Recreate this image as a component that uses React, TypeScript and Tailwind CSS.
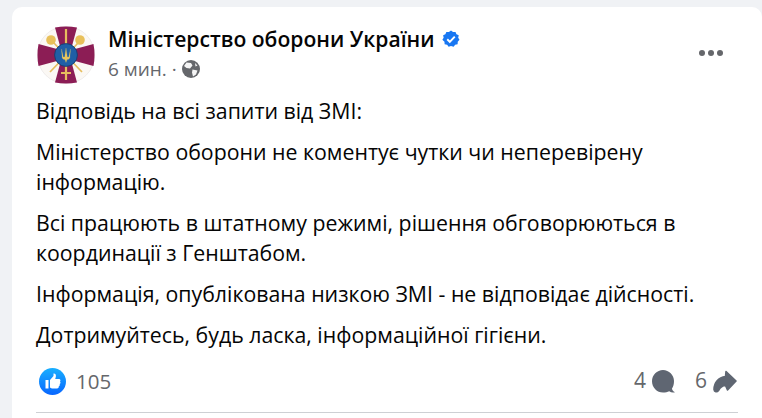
function Emblem() {
    return (
        <svg width="58" height="58" viewBox="0 0 58 58" className="shrink-0">
            <circle cx="29" cy="29" r="28.6" fill="#fbf8f4" stroke="#e6e2e2" strokeWidth="0.6" />
            {/* cross */}
            <path d="M18 1.5 Q29 -0.5 40 1.5 L35 20 L33 23 H25 L23 20 Z" fill="#8c1d55" />
            <path d="M18 56.5 Q29 58.5 40 56.5 L35 38 L33 35 H25 L23 38 Z" fill="#8c1d55" />
            <path d="M1.5 18 Q-0.5 29 1.5 40 L20 35 L23 33 V25 L20 23 Z" fill="#8c1d55" />
            <path d="M56.5 18 Q58.5 29 56.5 40 L38 35 L35 33 V25 L38 23 Z" fill="#8c1d55" />
            {/* sword */}
            <path d="M29 3 V54 M24 47 H34" stroke="#e6bd5e" strokeWidth="2.2" />
            {/* maces */}
            <path d="M15 15 L45 46 M43 15 L13 46" stroke="#e6bd5e" strokeWidth="1.7" />
            <circle cx="14" cy="14" r="4.8" fill="#e8c05a" />
            <circle cx="43" cy="14" r="4.8" fill="#e8c05a" />
            {/* shield */}
            <circle cx="29" cy="29" r="11.4" fill="#1f5fa6" stroke="#12386a" strokeWidth="0.8" />
            <path d="M24.5 23 L25.2 32 Q26 33.6 28 33.6 L29 36.5 L30 33.6 Q32 33.6 32.800 32 L33.500 23 L31.800 31 H30.300 L29 22 L27.700 31 H26.200 Z" fill="#e8c65e" stroke="#e8c65e" strokeWidth="0.2" />
        </svg>
    )
}

function VerifiedBadge() {
    return (
        <svg width="18" height="18" viewBox="0 0 24 24">
            <path d="M12 .8l2.7 2 3.3-.3 1.3 3.1 3 1.5-.7 3.3 1.7 2.6-2.3 2.5-.2 3.4-3.3.7-2 2.7-3.5-1-3.2 1-2-2.7-3.3-.7-.2-3.4L.5 13l1.7-2.6-.7-3.3 3-1.5L5.800 2.500 9.200 2.800z" fill="#1877f2" />
            <path d="M7 12.4l3.4 3.400L17 8.800" fill="none" stroke="#fff" strokeWidth="2.6" />
        </svg>
    )
}

function GlobeIcon() {
    return (
        <svg width="18" height="18" viewBox="0 0 18 18">
            <circle cx="9" cy="9" r="9" fill="#65676b" />
            <path d="M4.500 2.500 L9 3 L10.500 5.500 L8 8.500 L4.500 8 L2 6 Z M10.500 9.500 L15.500 10.500 L14 14.500 L11 16.500 L10 12.500 Z M13 3 L15.500 5.500 L13.500 6.500 Z" fill="#f5f5f5" />
        </svg>
    )
}

function MoreDots() {
    return (
        <svg width="24" height="6" viewBox="0 0 24 6" className="mt-[24px] mr-[15px] shrink-0">
            <circle cx="3" cy="3" r="3" fill="#65676b" />
            <circle cx="12" cy="3" r="3" fill="#65676b" />
            <circle cx="21" cy="3" r="3" fill="#65676b" />
        </svg>
    )
}

function LikeIcon() {
    return (
        <svg width="27" height="27" viewBox="0 0 27 27">
            <defs>
                <linearGradient id="likeBlue" x1="0" y1="0" x2="0" y2="1">
                    <stop offset="0" stopColor="#18afff" />
                    <stop offset="1" stopColor="#0866ff" />
                </linearGradient>
            </defs>
            <circle cx="13.5" cy="13.5" r="13.5" fill="url(#likeBlue)" />
            <path d="M6.500 12 H9.500 V20.500 H6.500 Z" fill="#fff" />
            <path d="M11 12 L14.500 8 V5.500 C16.500 5.200 17.300 7 16.800 9 L16.200 11 H20 C21.600 11 21.800 12.600 21 13.400 C21.800 14.400 21.600 15.500 20.700 16 C21 17 20.600 18 19.800 18.300 C20 19.600 19.200 20.500 18 20.500 H13 C12 20.500 11.500 20 11 19.600 Z" fill="#fff" />
        </svg>
    )
}

function CommentIcon() {
    return (
        <svg width="23" height="23" viewBox="0 0 23 23">
            <path d="M11 0 C17 0 22 5 22 11 C22 14 21.300 16.500 20 18.500 C20 20 21 21.300 23 22.200 C21 22.800 19 22.500 17.200 21.300 C15.500 22.200 13.500 22.500 11 22.500 C5 22.500 0 17.500 0 11.200 C0 5 5 0 11 0 Z" fill="#5f6672" />
        </svg>
    )
}

function ShareIcon() {
    return (
        <svg width="24" height="23" viewBox="0 0 24 23">
            <path d="M13 1.500 L23 11 L14.500 20 L12.500 15.500 C9.500 15.500 7.500 17 5.500 20.500 C4 22.500 1.200 22 1 19.500 C1 12.500 5.500 7.500 12.500 6.500 Z" fill="#5f6672" stroke="#5f6672" strokeWidth="1.600" strokeLinejoin="round" />
        </svg>
    )
}

export default function App() {
    return (
        <div className="w-[762px] h-[418px] overflow-hidden bg-[#f0f2f5] pt-[7px] pl-[12px] font-['Open_Sans','Noto_Sans',sans-serif]">
            <div className="h-[420px] bg-white rounded-t-[10px] px-[24px] pt-[19px]">
                {/* Header */}
                <div className="flex items-start pl-px">
                    <Emblem />
                    <div className="ml-[13px] flex-1">
                        <div className="flex items-center gap-[8px] h-[26px]">
                            <span className="text-[21.1px] font-semibold text-[#050505] leading-[26px]">Міністерство оборони України</span>
                            <VerifiedBadge />
                        </div>
                        <div className="mt-[2px] flex items-center gap-[5px] h-[30px] text-[19px] text-[#65676b]">
                            <span>6 мин. ·</span>
                            <GlobeIcon />
                        </div>
                    </div>
                    <MoreDots />
                </div>

                {/* Post body */}
                <div className="mt-[12px] flex flex-col gap-[11px] text-[21.3px] leading-[30px] text-[#050505]">
                    <p>Відповідь на всі запити від ЗМІ:</p>
                    <p>Міністерство оборони не коментує чутки чи неперевірену<br />інформацію.</p>
                    <p>Всі працюють в штатному режимі, рішення обговорюються в<br />координації з Генштабом.</p>
                    <p>Інформація, опублікована низкою ЗМІ - не відповідає дійсності.</p>
                    <p>Дотримуйтесь, будь ласка, інформаційної гігієни.</p>
                </div>

                {/* Reactions */}
                <div className="mt-[10px] h-[42px] flex items-center text-[#65676b]">
                    <span className="ml-[3px]"><LikeIcon /></span>
                    <span className="ml-[10px] text-[20.5px]">105</span>
                    <span className="ml-auto text-[21px]">4</span>
                    <span className="ml-[6px]"><CommentIcon /></span>
                    <span className="ml-[20px] text-[21px]">6</span>
                    <span className="ml-[6px] mr-px"><ShareIcon /></span>
                </div>
                <div className="mt-[10px] h-px bg-[#ced0d4]" />
            </div>
        </div>
    )
}
